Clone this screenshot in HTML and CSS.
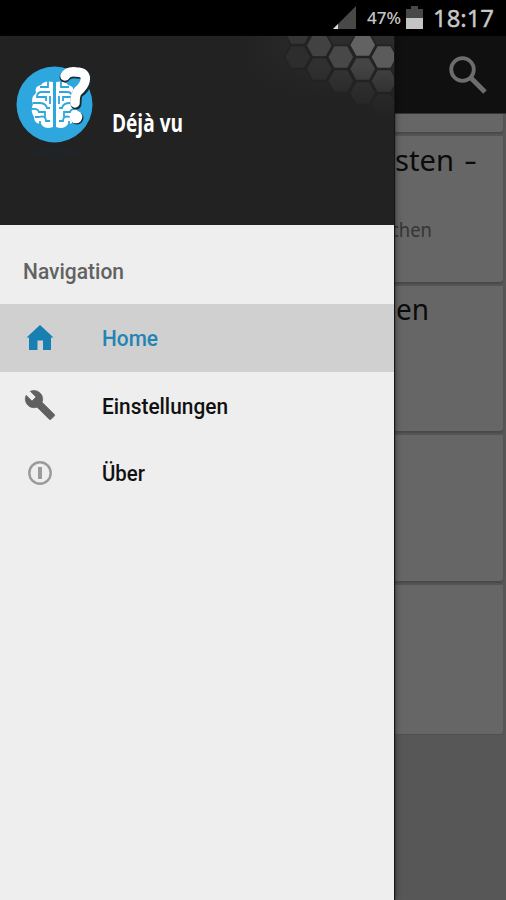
FILE: index.html
```html
<!DOCTYPE html>
<html lang="de">
<head>
<meta charset="utf-8">
<title>Déjà vu</title>
<link rel="stylesheet" href="styles.css">
</head>
<body>
<div class="phone">
  <header class="status">
    <svg class="signal" width="24" height="24" viewBox="0 0 24 24"><path d="M0 23L23 0V23Z" fill="#484848"/><path d="M0 23L5 18V23Z" fill="#ddd"/></svg>
    <svg class="pct" width="35" height="24"><text x="0" y="18" textLength="34" lengthAdjust="spacingAndGlyphs">47%</text></svg>
    <svg class="battery" width="17" height="24" viewBox="0 0 17 24"><path d="M5 0h7v3h5v10H0V3h5z" fill="#484848"/><path d="M0 12h17v11H0z" fill="#c4c4c4"/></svg>
    <svg class="clock" width="62" height="36"><text x="0" y="27" textLength="61" lengthAdjust="spacingAndGlyphs">18:17</text></svg>
  </header>
  <div class="appbar">
    <svg width="40" height="40" viewBox="0 0 40 40" fill="none" stroke="#6d6d6d"><circle cx="14.5" cy="13.500" r="11.3" stroke-width="3.8"/><path d="M23 22L37 36" stroke-width="5"/></svg>
  </div>
  <main class="list">
    <article class="card first"></article>
    <article class="card"><h2><svg width="90" height="44"><text x="1" y="35" textLength="59" lengthAdjust="spacingAndGlyphs">sten</text><text x="70" y="35" textLength="13" lengthAdjust="spacingAndGlyphs">-</text></svg></h2><p><svg width="50" height="28"><text x="0" y="21" textLength="42" lengthAdjust="spacingAndGlyphs">chen</text></svg></p></article>
    <article class="card"><h2><svg width="60" height="44"><text x="2" y="34" textLength="33" lengthAdjust="spacingAndGlyphs">en</text></svg></h2></article>
    <article class="card"></article>
    <article class="card last"></article>
  </main>
  <aside class="drawer">
    <div class="hero">
      <svg width="394" height="189" viewBox="0 36 394 189">
        <defs>
          <linearGradient id="top" x1="0" y1="0" x2="0" y2="1"><stop offset="0" stop-color="#2d2d2d"/><stop offset="1" stop-color="#222"/></linearGradient>
          <linearGradient id="left" x1="0" x2="1" y1="0" y2="0"><stop offset="0" stop-color="#222"/><stop offset="1" stop-color="#222" stop-opacity="0"/></linearGradient>
          <linearGradient id="fade" gradientUnits="userSpaceOnUse" x1="0" y1="66" x2="0" y2="118"><stop offset="0" stop-color="#222" stop-opacity="0"/><stop offset="1" stop-color="#222"/></linearGradient>
          <path id="hex" d="M-13.3 0L-6.8-11.6H6.8L13.3 0L6.8 11.6H-6.8Z"/>
        </defs>
        <path d="M0 36h394v189H0z" fill="#222"/>
        <path d="M240 36h154v78H240z" fill="url(#top)"/>
        <path d="M240 36h90v78h-90z" fill="url(#left)"/>
        <g stroke="#232323" stroke-width="1.6">
          <use href="#hex" x="297.7" y="33" fill="#353535"/>
          <use href="#hex" x="297.7" y="57" fill="#2d2d2d"/>
          <use href="#hex" x="319.3" y="45.5" fill="#424242"/>
          <use href="#hex" x="319.3" y="69" fill="#303030"/>
          <use href="#hex" x="340.8" y="57" fill="#484848"/>
          <use href="#hex" x="340.8" y="81" fill="#343434"/>
          <use href="#hex" x="362.7" y="45" fill="#626262"/>
          <use href="#hex" x="362.7" y="69" fill="#444"/>
          <use href="#hex" x="362.7" y="93" fill="#343434"/>
          <use href="#hex" x="384" y="57" fill="#5b5b5b"/>
          <use href="#hex" x="384" y="81" fill="#424242"/>
          <use href="#hex" x="384" y="105" fill="#303030"/>
        </g>
        <path d="M240 66h154v60H240z" fill="url(#fade)"/>
        <ellipse cx="55" cy="153" rx="24" ry="6" fill="#1f292e" opacity=".45"/>
        <circle cx="54.5" cy="104.5" r="38" fill="#2ea6de"/>
        <path d="M53 82Q44 80 41 85Q34 86 36 93Q30 98 33 104Q30 111 34 117Q34 124 41 124Q45 130 53 127ZM56 82Q65 80 68 85Q75 86 73 93Q79 98 76 104Q79 111 75 117Q75 124 68 124Q64 130 56 127Z" fill="#fff"/>
        <g fill="none" stroke="#2ea6de" stroke-width="1.8">
          <path d="M54.500 81V128M48 81V87H40M50 92H42Q37 92 37 97H46V101M33 103H39Q46 103 47 108H50M32 109Q38 108 39 112H45V117M50 121H46Q46 115 39 117H35M50 96V104M40 125V121"/>
          <path d="M61 81V87H69M59 92H67Q72 92 72 97H63V101M76 103H70Q63 103 62 108H59M77 109Q71 108 70 112H64V117M59 121H63Q63 115 70 117H74M59 96V104M69 125V121"/>
        </g>
        <g fill="none" stroke-linecap="round" stroke-linejoin="round">
          <path d="M65 77Q68 72 77 73Q88 73 86 82Q85 88 78 93Q76 95 76 104" stroke="#182a32" stroke-width="11"/>
          <circle cx="77" cy="118" r="6.5" fill="#182a32"/>
          <path d="M65 76Q68 71 76 72Q87 72 85 81Q84 86 78 91Q75 94 75 103" stroke="#fff" stroke-width="9.500"/>
          <circle cx="76" cy="117" r="6.300" fill="#fff"/>
        </g>
        <text class="brand" x="112" y="132" textLength="71" lengthAdjust="spacingAndGlyphs">Déjà vu</text>
      </svg>
    </div>
    <div class="heading"><svg width="110" height="30"><text x="0" y="22" textLength="101" lengthAdjust="spacingAndGlyphs">Navigation</text></svg></div>
    <nav>
      <a class="item active"><svg class="icon" width="32" height="32" viewBox="0 0 32 32"><path d="M16 3L29.5 15.5H27V28H19V18.5H13.500V28H5V15.500H2.500Z" fill="#177fb2"/></svg><svg width="150" height="30"><text x="0" y="23" textLength="56" lengthAdjust="spacingAndGlyphs">Home</text></svg></a>
      <a class="item"><svg class="icon" width="32" height="32" viewBox="0 0 24 24"><path d="M22.700 19L13.600 9.900c.9-2.300.4-5-1.500-6.900-2-2-5-2.400-7.400-1.300L9 6 6 9 1.600 4.700C.4 7.100.9 10.100 2.900 12.100c1.900 1.900 4.600 2.400 6.900 1.500l9.100 9.100c.4.4 1 .4 1.400 0l2.300-2.300c.5-.4.5-1.100.1-1.400z" fill="#606060" stroke="#606060" stroke-width=".5"/></svg><svg width="150" height="30"><text x="0" y="23.500" textLength="126" lengthAdjust="spacingAndGlyphs">Einstellungen</text></svg></a>
      <a class="item"><svg class="icon" width="32" height="32" viewBox="0 0 32 32" fill="none" stroke="#9b9b9b"><circle cx="16" cy="16" r="10.700" stroke-width="2.400"/><path d="M16 10V22" stroke-width="4"/></svg><svg width="150" height="30"><text x="0" y="23" textLength="43" lengthAdjust="spacingAndGlyphs">Über</text></svg></a>
    </nav>
  </aside>
</div>
</body>
</html>
```
FILE: styles.css
```css
* { box-sizing: border-box; }
body { margin: 0; font-family: Roboto, sans-serif; }
svg { display: block; flex: none; overflow: visible; }
.phone { position: relative; width: 506px; height: 900px; overflow: hidden; background: #575757; display: flex; flex-direction: column; }
.status { height: 36px; flex: none; background: #000; display: flex; justify-content: flex-end; align-items: flex-start; padding: 0 12px 0 0; }
.signal, .pct, .battery { margin-top: 6px; }
.signal { margin-right: 10px; }
.pct { margin-right: 4px; fill: #c4c4c4; font: 500 17px "Noto Sans", sans-serif; }
.battery { margin-right: 10px; }
.clock { fill: #c8c8c8; stroke: #c8c8c8; stroke-width: .4px; font: 400 24px "Noto Sans", sans-serif; margin-right: -1px; }
.appbar { height: 78px; flex: none; background: #101010; border-bottom: 1px solid #343434; display: flex; justify-content: flex-end; padding: 20px 18px 0 0; }
.list { display: flex; flex-direction: column; gap: 4px; padding-right: 3px; }
.card { height: 145.500px; background: #666; border-radius: 0 0 3px 3px; box-shadow: 0 2px 2px #484848; padding-left: 390px; }
.card.first { height: 18px; }
.card.last { height: 149px; box-shadow: 0 1px 1px #505050; }
h2, p { margin: 0; }
h2 { height: 80px; padding-left: 4px; fill: #0b0b0b; font: 400 29px "Noto Sans", sans-serif; }
p { fill: #353535; font: 400 19px "Noto Sans", sans-serif; }
.drawer { position: absolute; left: 0; top: 36px; width: 394px; height: 864px; background: #eee; box-shadow: 1px 0 1px #161616, 2px 0 6px rgba(0,0,0,.35); }
.hero { height: 189px; overflow: hidden; }
.brand { fill: #fff; font: 700 25px "Open Sans", sans-serif; }
.heading { height: 79px; padding: 32px 0 0 23px; fill: #626262; font: 500 21.500px Roboto, sans-serif; }
.item { height: 67.500px; display: flex; align-items: center; padding-left: 24px; fill: #111; font: 500 21.500px Roboto, sans-serif; }
.icon { margin-right: 46px; }
.active { background: #d0d0d0; fill: #2384b4; }
```
